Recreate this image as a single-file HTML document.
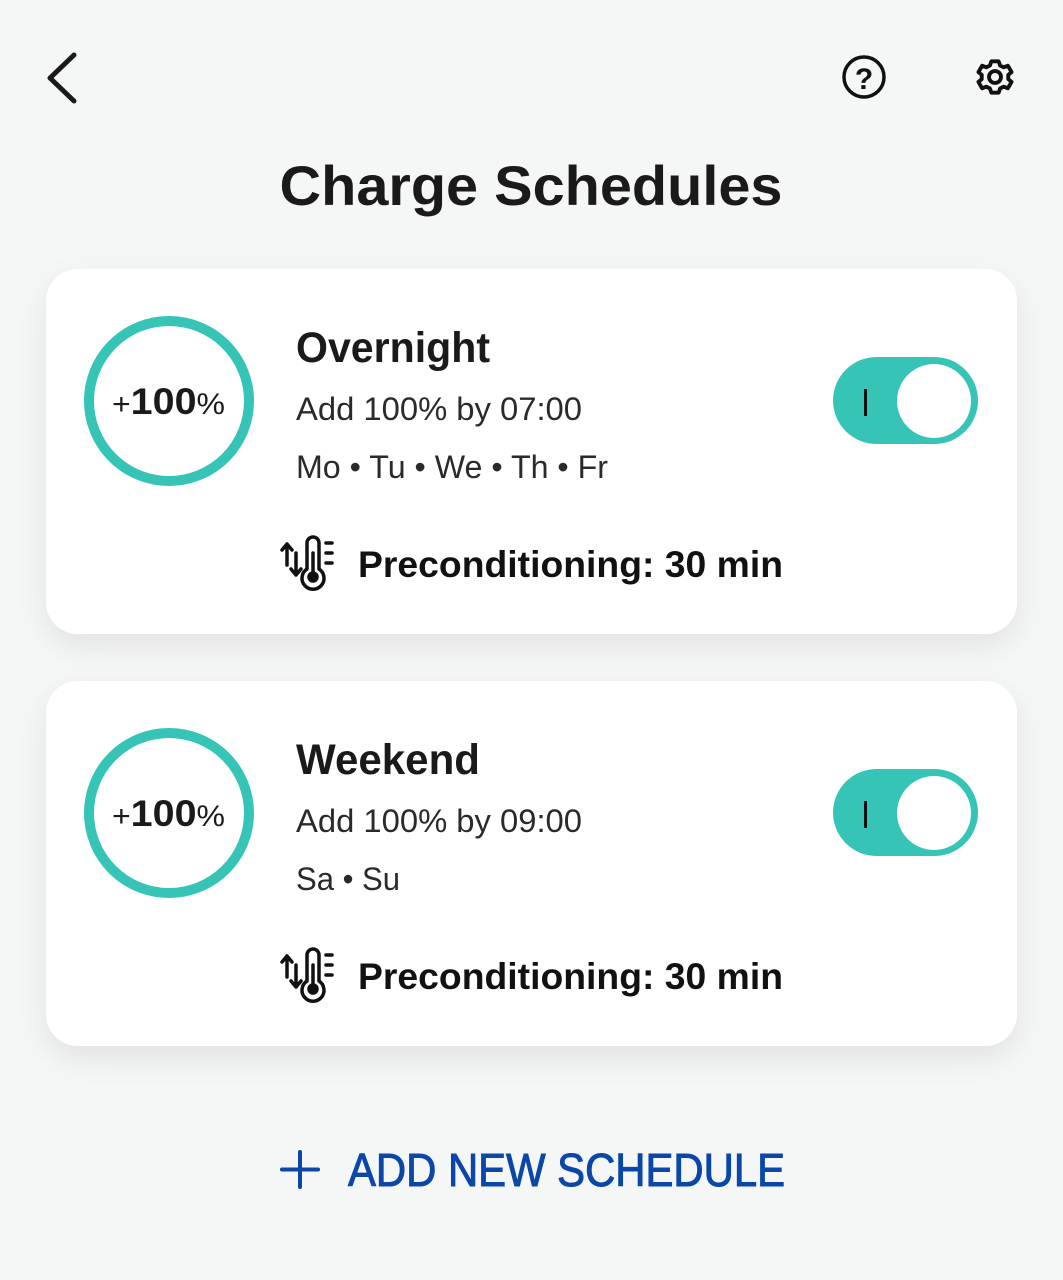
<!DOCTYPE html>
<html><head><meta charset="utf-8"><style>
html,body{margin:0;padding:0;background:#f5f6f6;}
svg{display:block}
text{font-family:"Liberation Sans",sans-serif;}
</style></head><body>
<svg width="1063" height="1280" viewBox="0 0 1063 1280" xmlns="http://www.w3.org/2000/svg">
<defs>
<filter id="sh" x="-10%" y="-20%" width="120%" height="150%">
<feDropShadow dx="0" dy="12" stdDeviation="14" flood-color="#000" flood-opacity="0.08"/>
</filter>
<g id="therm" fill="none" stroke="#111" stroke-width="3.5" stroke-linecap="round" stroke-linejoin="round">
<path d="M287 545 v20 M282 550 l5 -6 l5 6"/>
<path d="M296 553 v22 M291 569 l5 6 l5 -6"/>
<path d="M307 569 V543 a6 6 0 0 1 12 0 V569 a11 11 0 1 1 -12 0z"/>
<path d="M313 553 V575"/>
<circle cx="313" cy="577" r="4" fill="#111"/>
<path d="M326 543 h6 M326 553 h6 M326 563 h6"/>
</g>
</defs>

<path d="M74 55 L50 78 L74 101" fill="none" stroke="#1a1a1a" stroke-width="5" stroke-linecap="round" stroke-linejoin="round"/>
<circle cx="864" cy="77" r="20" fill="none" stroke="#111" stroke-width="3.5"/>
<text x="864" y="89" text-anchor="middle" font-size="30" font-weight="bold" fill="#111">?</text>
<g transform="translate(995,77) scale(0.92)" fill="none" stroke="#111" stroke-width="4.2" stroke-linejoin="round">
<path d="M-4 -17 h8 l1.5 4.5 l4 2 l4.5 -1.8 l4 7 l-3.6 3 v4.6 l3.6 3 l-4 7 l-4.5 -1.8 l-4 2 l-1.5 4.5 h-8 l-1.5 -4.5 l-4 -2 l-4.5 1.8 l-4 -7 l3.6 -3 v-4.6 l-3.6 -3 l4 -7 l4.5 1.8 l4 -2 z"/>
<circle cx="0" cy="0" r="6.5"/>
</g>

<text x="531" y="205" text-anchor="middle" font-size="56" font-weight="bold" fill="#1a1a1a" textLength="503" lengthAdjust="spacingAndGlyphs">Charge Schedules</text>

<g>
<rect x="46" y="269" width="971" height="365" rx="32" fill="#fff" filter="url(#sh)"/>
<circle cx="169" cy="401" r="80" fill="none" stroke="#35c4b5" stroke-width="10"/>
<text x="112" y="414" font-size="30" fill="#1a1a1a" textLength="113" lengthAdjust="spacingAndGlyphs">+<tspan font-weight="bold" font-size="37">100</tspan>%</text>
<text x="296" y="362" font-size="43" font-weight="bold" fill="#1a1a1a" textLength="194" lengthAdjust="spacingAndGlyphs">Overnight</text>
<text x="296" y="420" font-size="32" fill="#2a2a2a" textLength="286" lengthAdjust="spacingAndGlyphs">Add 100% by 07:00</text>
<text x="296" y="478" font-size="32" fill="#2a2a2a" textLength="312" lengthAdjust="spacingAndGlyphs">Mo • Tu • We • Th • Fr</text>
<rect x="833" y="357" width="145" height="87" rx="43.5" fill="#35c4b5"/>
<circle cx="934" cy="401" r="37" fill="#fff"/>
<rect x="864" y="389" width="3" height="27" fill="#111"/>
<use href="#therm"/>
<text x="358" y="577" font-size="37" font-weight="bold" fill="#111" textLength="425" lengthAdjust="spacingAndGlyphs">Preconditioning: 30 min</text>
</g>

<g transform="translate(0,412)">
<rect x="46" y="269" width="971" height="365" rx="32" fill="#fff" filter="url(#sh)"/>
<circle cx="169" cy="401" r="80" fill="none" stroke="#35c4b5" stroke-width="10"/>
<text x="112" y="414" font-size="30" fill="#1a1a1a" textLength="113" lengthAdjust="spacingAndGlyphs">+<tspan font-weight="bold" font-size="37">100</tspan>%</text>
<text x="296" y="362" font-size="43" font-weight="bold" fill="#1a1a1a" textLength="184" lengthAdjust="spacingAndGlyphs">Weekend</text>
<text x="296" y="420" font-size="32" fill="#2a2a2a" textLength="286" lengthAdjust="spacingAndGlyphs">Add 100% by 09:00</text>
<text x="296" y="478" font-size="32" fill="#2a2a2a" textLength="104" lengthAdjust="spacingAndGlyphs">Sa • Su</text>
<rect x="833" y="357" width="145" height="87" rx="43.5" fill="#35c4b5"/>
<circle cx="934" cy="401" r="37" fill="#fff"/>
<rect x="864" y="389" width="3" height="27" fill="#111"/>
<use href="#therm"/>
<text x="358" y="577" font-size="37" font-weight="bold" fill="#111" textLength="425" lengthAdjust="spacingAndGlyphs">Preconditioning: 30 min</text>
</g>

<path d="M300 1152 V1187 M282 1169.5 H318" stroke="#0b47a8" stroke-width="4" stroke-linecap="round"/>
<text x="348" y="1186" font-size="46" fill="#0b47a8" stroke="#0b47a8" stroke-width="1" textLength="437" lengthAdjust="spacingAndGlyphs">ADD NEW SCHEDULE</text>
</svg>
</body></html>
